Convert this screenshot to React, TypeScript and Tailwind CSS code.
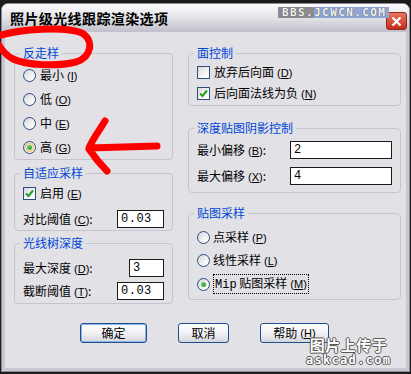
import React from 'react';

const Acc = ({ k }: { k: string }) => (
  <span className="font-['Liberation_Sans',sans-serif] text-[11px] ml-[3px]">
    (<span className="underline">{k}</span>)
  </span>
);

function Radio({ checked, hot }: { checked?: boolean; hot?: boolean }) {
  return (
    <span className="relative w-[13px] h-[13px] rounded-full border border-[#2c4f7c] bg-gradient-to-br from-[#d2d2d8] via-[#f0f0f2] to-white flex items-center justify-center shrink-0">
      {hot && <span className="absolute inset-[1px] rounded-full border border-[#f3b94a]" />}
      {checked && <span className="w-[5px] h-[5px] rounded-full bg-gradient-to-br from-[#6fd36f] to-[#1c9a1c]" />}
    </span>
  );
}

function Check({ checked }: { checked?: boolean }) {
  return (
    <span className="w-[13px] h-[13px] border border-[#2c4f7c] bg-gradient-to-br from-[#d6d6dc] via-[#f2f2f4] to-white flex items-center justify-center shrink-0">
      {checked && (
        <svg width="9" height="9" viewBox="0 0 9 9">
          <path d="M1 4.5 L3.5 7 L8 1.5" fill="none" stroke="#21a121" strokeWidth="2" />
        </svg>
      )}
    </span>
  );
}

function Group({ title, h, className, children }: { title: string; h: string; className?: string; children: React.ReactNode }) {
  return (
    <fieldset className={`${h} ${className ?? ''} border border-[#c6c4cf] rounded-[4px] px-2 flex flex-col`}>
      <legend className="text-[12px] leading-[16px] text-[#0046d5] -ml-[3px] px-[3px]">{title}</legend>
      {children}
    </fieldset>
  );
}

const Field = ({ w, v }: { w: string; v: string }) => (
  <span className={`${w} h-[18px] border border-[#1a1a1a] bg-white flex items-center pl-[3px] font-['Liberation_Mono',monospace] text-[12px] tracking-[0.5px]`}>
    {v}
  </span>
);

function Btn({ w, label, def, acc }: { w: string; label: string; def?: boolean; acc?: string }) {
  return (
    <div
      className={`${w} h-[20px] border border-[#1f4f8c] rounded-[3px] bg-gradient-to-b from-white via-[#f2f2f5] to-[#d4d4dc] flex items-center justify-center text-[12px] ${
        def ? 'shadow-[inset_0_0_0_1px_#8fb2e8]' : ''
      }`}
    >
      {label}
      {acc && <Acc k={acc} />}
    </div>
  );
}

export default function App() {
  return (
    <div className="relative w-[411px] h-[374px] overflow-hidden bg-[#1c1c1c] pt-[3px] px-[1px] pb-[2px] font-['Noto_Sans_CJK_SC','Liberation_Sans',sans-serif] text-black">
      <div className="h-full flex flex-col rounded-t-[7px] border border-[#8a8996] bg-[#e2e1e6]">
        {/* title bar */}
        <div className="h-[28px] shrink-0 rounded-t-[6px] bg-gradient-to-b from-[#fdfdfd] via-[#e2e2e8] to-[#c1c0cb] flex items-center pl-[8px] pr-[2px]">
          <span className="text-[14px] font-bold leading-none tracking-[0.4px]">照片级光线跟踪渲染选项</span>
          <div className="ml-auto mt-[6px] w-[21px] h-[18px] rounded-[3px] bg-gradient-to-b from-[#e8735f] to-[#c22a1a] border border-[#8c2a20] flex items-center justify-center">
            <svg width="11" height="11" viewBox="0 0 11 11">
              <path d="M1.5 1.5 L9.5 9.5 M9.5 1.5 L1.5 9.5" stroke="white" strokeWidth="2.2" />
            </svg>
          </div>
        </div>

        {/* body */}
        <div className="flex-1 flex flex-col border-x-[3px] border-b-[3px] border-[#c8c7d0] text-[12px] leading-[16px]">
          <div className="flex gap-[15px] pl-[9px] pt-[13px]">
            {/* left column */}
            <div className="w-[159px] flex flex-col">
              <Group title="反走样" h="h-[115px]">
                <div className="pt-[2px] flex flex-col">
                  {[
                    ['最小', 'I'],
                    ['低', 'O'],
                    ['中', 'E'],
                    ['高', 'G'],
                  ].map(([t, k], i) => (
                    <div key={t} className="h-[24px] flex items-center gap-[4px]">
                      <Radio checked={i === 3} hot={i === 3} />
                      <span>
                        {t}
                        <Acc k={k} />
                      </span>
                    </div>
                  ))}
                </div>
              </Group>
              <Group title="自适应采样" h="h-[66px]" className="mt-[5px]">
                <div className="pt-[1px] flex flex-col gap-[4px]">
                  <div className="h-[22px] flex items-center gap-[4px]">
                    <Check checked />
                    <span>
                      启用
                      <Acc k="E" />
                    </span>
                  </div>
                  <div className="h-[22px] flex items-center justify-between">
                    <span>
                      对比阈值
                      <Acc k="C" />:
                    </span>
                    <Field w="w-[47px]" v="0.03" />
                  </div>
                </div>
              </Group>
              <Group title="光线树深度" h="h-[69px]" className="mt-[4px]">
                <div className="pt-[6px] flex flex-col gap-[1px]">
                  <div className="h-[22px] flex items-center justify-between">
                    <span>
                      最大深度
                      <Acc k="D" />:
                    </span>
                    <Field w="w-[35px]" v="3" />
                  </div>
                  <div className="h-[22px] flex items-center justify-between">
                    <span>
                      截断阈值
                      <Acc k="T" />:
                    </span>
                    <Field w="w-[47px]" v="0.03" />
                  </div>
                </div>
              </Group>
            </div>

            {/* right column */}
            <div className="w-[213px] flex flex-col">
              <Group title="面控制" h="h-[61px]">
                <div className="pt-[1px] flex flex-col gap-[1px]">
                  <div className="h-[20px] flex items-center gap-[4px]">
                    <Check />
                    <span>
                      放弃后向面
                      <Acc k="D" />
                    </span>
                  </div>
                  <div className="h-[20px] flex items-center gap-[4px]">
                    <Check checked />
                    <span>
                      后向面法线为负
                      <Acc k="N" />
                    </span>
                  </div>
                </div>
              </Group>
              <Group title="深度贴图阴影控制" h="h-[73px]" className="mt-[14px]">
                <div className="pt-[4px] flex flex-col gap-[6px] pr-[0px]">
                  <div className="h-[20px] flex items-center justify-between">
                    <span>
                      最小偏移
                      <Acc k="B" />:
                    </span>
                    <Field w="w-[102px]" v="2" />
                  </div>
                  <div className="h-[20px] flex items-center justify-between">
                    <span>
                      最大偏移
                      <Acc k="X" />:
                    </span>
                    <Field w="w-[102px]" v="4" />
                  </div>
                </div>
              </Group>
              <Group title="贴图采样" h="h-[95px]" className="mt-[12px]">
                <div className="pt-[5px] flex flex-col">
                  <div className="h-[22px] flex items-center gap-[3px]">
                    <Radio />
                    <span>
                      点采样
                      <Acc k="P" />
                    </span>
                  </div>
                  <div className="h-[22px] mt-[1px] flex items-center gap-[3px]">
                    <Radio />
                    <span>
                      线性采样
                      <Acc k="L" />
                    </span>
                  </div>
                  <div className="h-[22px] mt-[2px] flex items-center gap-[3px]">
                    <Radio checked />
                    <span className="border border-dotted border-black px-[1px] leading-[15px]">
                      <span className="font-['Liberation_Mono',monospace]">Mip</span> 贴图采样
                      <Acc k="M" />
                    </span>
                  </div>
                </div>
              </Group>
            </div>
          </div>

          {/* buttons */}
          <div className="mt-[19px] flex justify-center gap-[31px] pr-[2px]">
            <Btn w="w-[67px]" label="确定" def />
            <Btn w="w-[51px]" label="取消" />
            <Btn w="w-[69px]" label="帮助" acc="H" />
          </div>
        </div>
      </div>

      {/* watermark top */}
      <div className="absolute left-[278px] top-[7px] h-[11px] flex items-center font-['DejaVu_Sans_Mono',monospace] font-bold text-[11px] leading-none tracking-[1.4px] text-[#f4f4f4] [text-shadow:0_0_1px_#333]">
        <span className="bg-[#8c8c90] h-full flex items-center pl-[4px]">BBS.</span>
        <span className="bg-[#8fa6d4] h-full flex items-center pr-[3px]">JCWCN.COM</span>
      </div>

      {/* watermark bottom */}
      <div className="absolute left-[306px] top-[336px] flex flex-col items-center text-white [text-shadow:1px_0_0_#555,-1px_0_0_#555,0_1px_0_#555,0_-1px_0_#555]">
        <span className="text-[15px] leading-[18px] font-bold tracking-[0.5px]">图片上传于</span>
        <span className="font-['DejaVu_Sans_Mono',monospace] font-bold text-[12px] leading-[12px] tracking-[1.3px]">askcad.com</span>
      </div>

      {/* red annotations */}
      <svg className="absolute inset-0 pointer-events-none" width="411" height="374" viewBox="0 0 411 374">
        <path
          d="M -2 36 C 20 29, 65 26, 82 33 C 94 40, 92 57, 76 62 C 56 67, 26 65, 13 59 C 5 55, 1 49, -2 44"
          fill="none"
          stroke="#ff0000"
          strokeWidth="7"
          strokeLinecap="round"
        />
        <path
          d="M 105 121 C 99 131, 92 140, 89 148 L 157 146 M 89 149 C 95 158, 101 165, 107 171"
          fill="none"
          stroke="#ff0000"
          strokeWidth="7"
          strokeLinecap="round"
          strokeLinejoin="round"
        />
      </svg>
    </div>
  );
}
